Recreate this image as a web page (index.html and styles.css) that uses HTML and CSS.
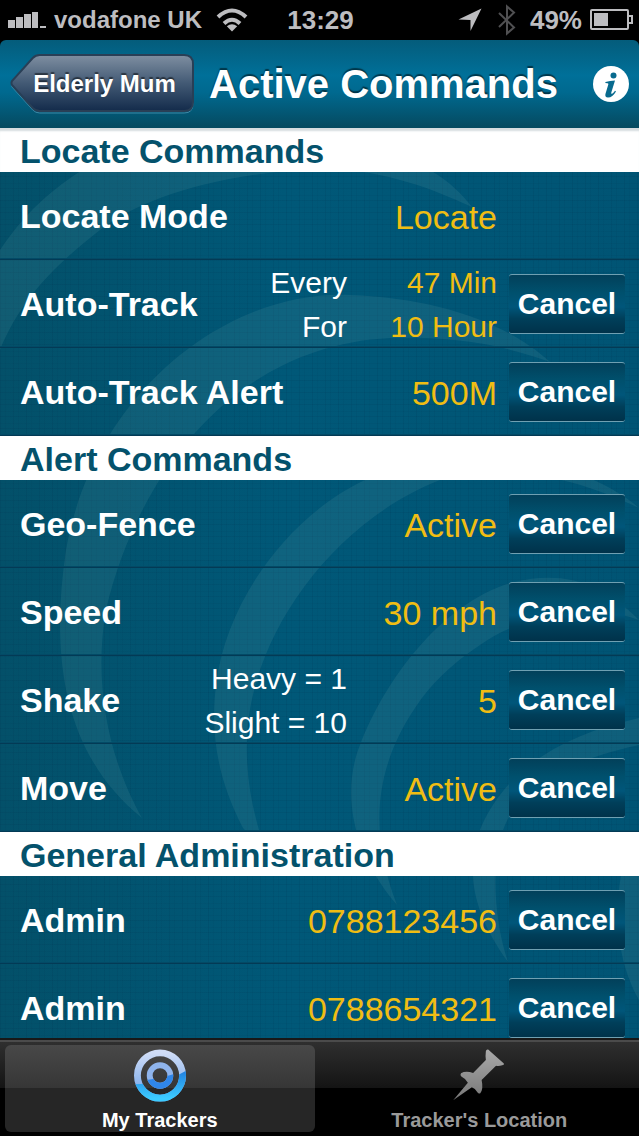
FILE: index.html
```html
<!DOCTYPE html>
<html lang="en">
<head>
  <meta charset="UTF-8">
  <meta name="viewport" content="width=device-width, initial-scale=1">
  <title>Active Commands</title>
  <link rel="stylesheet" href="styles.css">
</head>
<body>

  <!-- STATUS BAR -->
  <div class="status">
    <div class="status-left">
      <svg class="signal" width="38" height="18" viewBox="0 0 38 18" fill="#bdbdc0">
        <rect x="0" y="9" width="7" height="8"/>
        <rect x="8" y="6" width="7" height="11"/>
        <rect x="16" y="3" width="7" height="14"/>
        <rect x="24" y="1" width="6" height="16"/>
        <rect x="32" y="15" width="6" height="2"/>
      </svg>
      <span>vodafone UK</span>
      <svg class="wifi" width="32" height="24" viewBox="0 0 32 24" fill="none" stroke="#bdbdc0" stroke-width="4">
        <path d="M2 9Q16 -4 30 9"/>
        <path d="M8 15.500Q16 8 24 15.500"/>
        <path d="M16 23.500L10.800 18.200Q16 14.500 21.200 18.200Z" fill="#bdbdc0" stroke="none"/>
      </svg>
    </div>
    <div class="clock">13:29</div>
    <div class="status-right">
      <svg width="24" height="24" viewBox="0 0 24 24"><path d="M23.500 0.500L12.500 23V12L0.500 11.500Z" fill="#bdbdc0"/></svg>
      <svg class="bluetooth" width="18" height="32" viewBox="0 0 18 32" fill="none" stroke="#505052" stroke-width="2">
        <path d="M1 9L16 23.500L9 29.500V2.500L16 8.500L1 23"/>
      </svg>
      <span>49%</span>
      <svg class="battery" width="43" height="22" viewBox="0 0 43 22">
        <rect x="1" y="1" width="37" height="19" rx="1" fill="none" stroke="#bdbdc0" stroke-width="2"/>
        <rect x="4" y="4" width="14" height="13" fill="#bdbdc0"/>
        <path d="M38 7H42V14H38" fill="none" stroke="#bdbdc0" stroke-width="2"/>
      </svg>
    </div>
  </div>

  <!-- NAVIGATION BAR -->
  <header class="navbar">
    <button type="button" class="back">
      <svg class="back-shape" viewBox="0 0 186 60" preserveAspectRatio="none">
        <defs>
          <linearGradient id="back-fill" x1="0" y1="0" x2="0" y2="1">
            <stop offset="0" stop-color="#7f8fa1"/>
            <stop offset="0.500" stop-color="#435a75"/>
            <stop offset="1" stop-color="#132b4b"/>
          </linearGradient>
        </defs>
        <path d="M30 3H176Q185 3 185 12V50Q185 59 176 59H30Q26 59 23 56L2 33Q1 31 2 29L23 6Q26 3 30 3Z" fill="none" stroke="#3d88a6" stroke-width="1"/>
        <path d="M30 1H176Q185 1 185 10V48Q185 57 176 57H30Q26 57 23 54L2 31Q1 29 2 27L23 4Q26 1 30 1Z" fill="url(#back-fill)" stroke="#293f56" stroke-width="2"/>
      </svg>
      <span class="back-text">Elderly Mum</span>
    </button>
    <h1>Active Commands</h1>
    <button type="button" class="info" aria-label="Information">
      <svg width="36" height="36" viewBox="0 0 36 36">
        <circle cx="18" cy="18" r="18" fill="#fff"/>
        <circle cx="20.500" cy="9.500" r="3" fill="#086a8e"/>
        <path d="M12.500 16Q17 14.500 22 14.500L18.300 26.500Q17.800 28.500 19.500 27.500Q21 26.500 22 24.800L23 25.500Q19.500 31.500 15 31.500Q11.500 31.500 12.500 27.800L15.300 18.500Q15.600 17.200 14.500 17.200L12.300 17Z" fill="#086a8e"/>
      </svg>
    </button>
  </header>

  <!-- COMMAND LIST -->
  <main class="commands">
    <svg class="swirl" viewBox="0 128 639 910" preserveAspectRatio="xMidYMin slice" fill="#7fb3b3" fill-opacity="0.12">
      <path d="M0 250C30 205 60 184 90 165C180 130 370 120 430 170C450 182 462 194 472 207C430 188 390 172 325 168C210 174 140 200 100 230C55 265 20 300 0 350Z"/>
      <path d="M142 818C70 760 48 670 66 550C92 400 220 290 350 295C440 298 510 325 550 362C490 340 440 337 390 338C230 346 136 480 106 610C92 690 112 765 142 818Z"/>
      <path d="M262 840C252 836 246 832 243 828C218 780 210 735 216 685C226 600 290 515 365 480C450 445 570 450 639 508C570 475 510 465 440 480C350 515 280 600 257 680C240 735 246 790 262 840Z"/>
      <path d="M397 905C350 850 342 790 360 745C385 680 440 605 510 583C560 570 600 580 639 620C600 605 530 610 480 645C450 665 430 685 415 708C370 775 372 840 397 905Z"/>
      <path d="M508 962C470 910 465 865 482 825C510 765 565 735 639 718V745C560 762 520 790 505 825C490 860 494 920 508 962Z"/>
      <path d="M639 1000C616 960 614 910 622 870L639 850Z"/>
    </svg>

    <div class="list">
      <section>
        <h2>Locate Commands</h2>
        <div class="row">
          <h3>Locate Mode</h3>
          <div class="value">Locate</div>
        </div>
        <div class="row">
          <h3>Auto-Track</h3>
          <div class="hint">Every<br>For</div>
          <div class="value double">47 Min<br>10 Hour</div>
          <button type="button" class="cancel">Cancel</button>
        </div>
        <div class="row">
          <h3>Auto-Track Alert</h3>
          <div class="value">500M</div>
          <button type="button" class="cancel">Cancel</button>
        </div>
      </section>

      <section>
        <h2>Alert Commands</h2>
        <div class="row">
          <h3>Geo-Fence</h3>
          <div class="value">Active</div>
          <button type="button" class="cancel">Cancel</button>
        </div>
        <div class="row">
          <h3>Speed</h3>
          <div class="value">30 mph</div>
          <button type="button" class="cancel">Cancel</button>
        </div>
        <div class="row">
          <h3>Shake</h3>
          <div class="hint">Heavy = 1<br>Slight = 10</div>
          <div class="value">5</div>
          <button type="button" class="cancel">Cancel</button>
        </div>
        <div class="row">
          <h3>Move</h3>
          <div class="value">Active</div>
          <button type="button" class="cancel">Cancel</button>
        </div>
      </section>

      <section>
        <h2>General Administration</h2>
        <div class="row">
          <h3>Admin</h3>
          <div class="value">0788123456</div>
          <button type="button" class="cancel">Cancel</button>
        </div>
        <div class="row">
          <h3>Admin</h3>
          <div class="value">0788654321</div>
          <button type="button" class="cancel">Cancel</button>
        </div>
      </section>
    </div>
  </main>

  <!-- TAB BAR -->
  <nav class="tabs">
    <a href="#trackers" class="tab active">
      <svg width="54" height="54" viewBox="0 0 54 54" fill="none">
        <defs>
          <linearGradient id="ring-top" x1="0" y1="0" x2="0" y2="1">
            <stop offset="0" stop-color="#cfdcf6"/>
            <stop offset="1" stop-color="#6ea3ea"/>
          </linearGradient>
          <linearGradient id="ring-bottom" x1="0" y1="0" x2="0" y2="1">
            <stop offset="0.300" stop-color="#1c74dc"/>
            <stop offset="1" stop-color="#3ccbff"/>
          </linearGradient>
          <clipPath id="lower-half"><path d="M0 36Q30 36 54 22V54H0Z"/></clipPath>
          <clipPath id="lower-inner"><path d="M0 32Q30 32 54 20V54H0Z"/></clipPath>
        </defs>
        <circle cx="27" cy="27" r="23" stroke="url(#ring-top)" stroke-width="7"/>
        <circle cx="27" cy="27" r="10.500" stroke="#8fb4ec" stroke-width="6"/>
        <circle cx="27" cy="27" r="23" stroke="url(#ring-bottom)" stroke-width="7" clip-path="url(#lower-half)"/>
        <circle cx="27" cy="27" r="10.500" stroke="#2f86ea" stroke-width="6" clip-path="url(#lower-inner)"/>
      </svg>
      <span>My Trackers</span>
    </a>
    <a href="#location" class="tab">
      <svg width="54" height="54" viewBox="70 57 162 162">
        <defs>
          <linearGradient id="pin-fill" x1="0" y1="0" x2="0" y2="1">
            <stop offset="0" stop-color="#aaa"/>
            <stop offset="1" stop-color="#777"/>
          </linearGradient>
        </defs>
        <path d="M175 59Q179 57 184 63L227 101Q229 106 222 107Q211 110 203 108L159 152Q165 180 155 192Q150 195 146 189Q139 177 129 174L72 214L117 160Q111 148 97 141Q92 137 96 131Q110 123 133 130L172 91Q170 79 172 64Q172 61 175 59Z" fill="url(#pin-fill)"/>
      </svg>
      <span>Tracker's Location</span>
    </a>
  </nav>

</body>
</html>
```
FILE: styles.css
```css
* {
  box-sizing: border-box;
}
body {
  margin: 0;
  height: 100vh;
  display: flex;
  flex-direction: column;
  background: #000;
  color: #fff;
  font-family: "Liberation Sans", Arial, sans-serif;
}
h1, h2, h3 {
  margin: 0;
}
button {
  border: none;
  padding: 0;
  color: #fff;
  font-family: inherit;
  font-weight: bold;
  cursor: pointer;
}

/* status bar */
.status {
  flex: none;
  height: 40px;
  padding: 0 6px 0 8px;
  display: grid;
  grid-template-columns: 1fr auto 1fr;
  align-items: center;
  color: #bdbdc0;
  font-size: 24px;
  font-weight: bold;
}
.status-left,
.status-right {
  display: flex;
  align-items: center;
  gap: 8px;
}
.status-left {
  white-space: nowrap;
}
.status-right {
  justify-content: flex-end;
  font-size: 26px;
}
.wifi {
  margin-left: 6px;
}
.bluetooth {
  margin: 0 6px 0 8px;
}
.clock {
  font-size: 26px;
}

/* navigation bar */
.navbar {
  flex: none;
  height: 88px;
  padding: 0 10px;
  display: flex;
  align-items: center;
  justify-content: space-between;
  border-radius: 6px 6px 0 0;
  background: linear-gradient(#045c7b, #007099 40%, #00698f 60%, #05495f);
}
.back {
  position: relative;
  width: 184px;
  height: 60px;
  padding-left: 5px;
  background: none;
  font-size: 24px;
  text-shadow: 0 -2px 1px rgba(0, 0, 0, 0.5);
}
.back-shape {
  position: absolute;
  inset: 0;
  width: 100%;
  height: 100%;
}
.back-text {
  position: relative;
}
h1 {
  font-size: 40px;
  white-space: nowrap;
  text-shadow: 0 -2px 1px rgba(0, 0, 0, 0.5);
}
.info {
  margin-left: 20px;
  background: none;
}
.info svg {
  display: block;
}

/* command list */
.commands {
  flex: 1;
  min-height: 0;
  position: relative;
  overflow: hidden;
  background:
    repeating-linear-gradient(90deg, rgba(0, 40, 70, 0.1) 0 1px, transparent 1px 5px, rgba(0, 40, 70, 0.06) 5px 6px, transparent 6px 13px),
    repeating-linear-gradient(rgba(0, 40, 70, 0.1) 0 1px, transparent 1px 7px, rgba(0, 40, 70, 0.06) 7px 8px, transparent 8px 12px),
    linear-gradient(90deg, #035069, #005878 45%, #005474);
}
.swirl {
  position: absolute;
  inset: 0;
  width: 100%;
  height: 100%;
}
.list {
  position: relative;
  height: 100%;
  overflow-y: auto;
  scrollbar-width: none;
}
h2 {
  padding: 2px 20px 0;
  background: #fff;
  color: #04526c;
  font-size: 34px;
  line-height: 42px;
}
section:first-child h2 {
  box-shadow: inset 0 4px 2px -1px #d5dcdf;
}
.row {
  height: 88px;
  padding: 0 14px 0 20px;
  display: grid;
  grid-template-columns: auto 1fr auto 116px;
  grid-template-rows: 100%;
  column-gap: 12px;
  align-items: center;
  box-shadow: inset 0 -1px #033a55, inset 0 -2px #034a66;
}
h3 {
  font-size: 34px;
  white-space: nowrap;
}
.hint {
  grid-column: 2;
  padding-top: 2px;
  font-size: 30px;
  line-height: 44px;
  text-align: right;
  white-space: nowrap;
}
.value {
  grid-column: 3;
  min-width: 138px;
  padding-top: 2px;
  color: #f0bd13;
  font-size: 34px;
  text-align: right;
  white-space: nowrap;
}
.double {
  font-size: 30px;
  line-height: 44px;
}
.cancel {
  grid-column: 4;
  height: 60px;
  border-top: 1px solid #6fa0b2;
  border-bottom: 1px solid #6fa0b2;
  border-radius: 3px;
  background: linear-gradient(#02405a, #00506d 30%, #00567a 55%, #003f5a 75%, #00324a);
  font-size: 30px;
}

/* tab bar */
.tabs {
  flex: none;
  height: 98px;
  display: flex;
  padding: 5px 0 4px;
  border-top: 2px solid #181818;
  box-shadow: inset 0 2px #4b4b4b;
  background: linear-gradient(#303030, #141414 48px, #000 48px);
}
.tab {
  flex: 1;
  margin: 0 5px;
  padding-top: 4px;
  display: flex;
  flex-direction: column;
  align-items: center;
  gap: 7px;
  border-radius: 6px;
  color: #9a9a9a;
  font-size: 20px;
  font-weight: bold;
  text-decoration: none;
}
.active {
  background: linear-gradient(#484848, #363636 43px, #262626 43px);
  color: #fff;
}
```
